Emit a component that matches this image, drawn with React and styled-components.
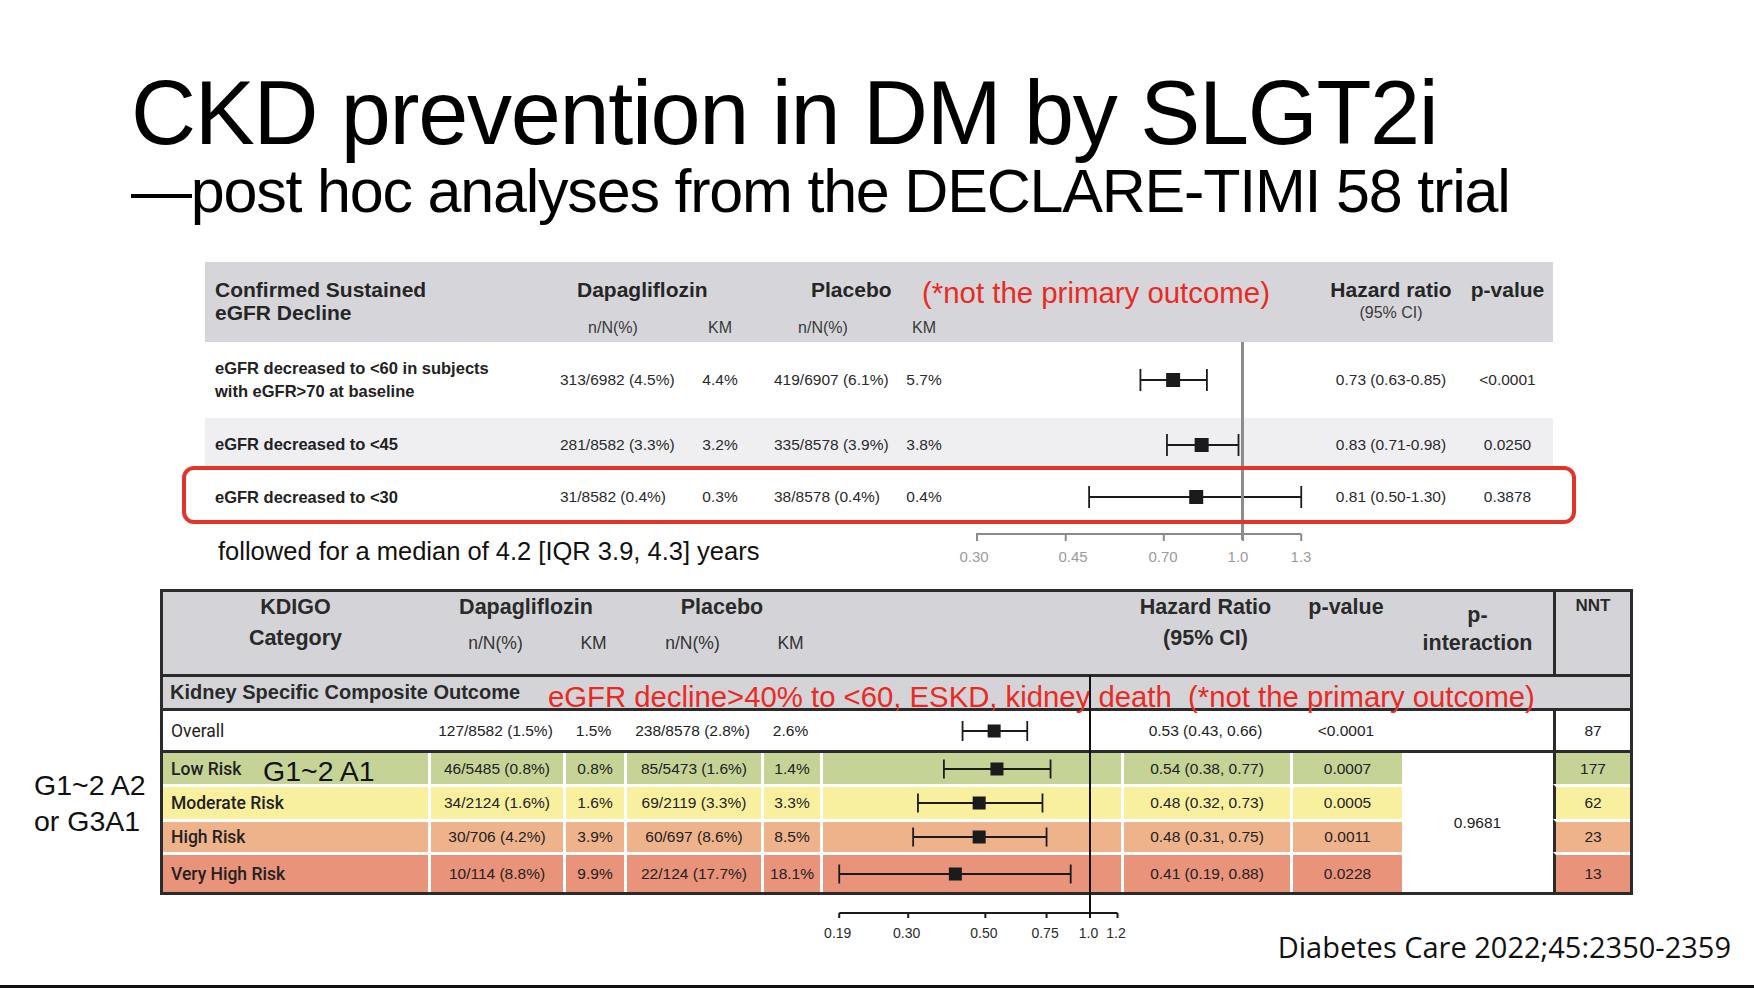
import { Fragment } from "react";
import styled, { createGlobalStyle, css } from "styled-components";

const GlobalStyle = createGlobalStyle`
  html, body {
    margin: 0;
    padding: 0;
    background: #fff;
  }
  body {
    font-family: "Liberation Sans", Arial, sans-serif;
    color: #111;
  }
  * {
    box-sizing: border-box;
  }
`;

const TOP_COLS = "355px 106px 108px 98px 104px 344px 142px 91px";
const BOTTOM_COLS = "265px 135px 61px 137px 59px 301px 169px 112px 151px 77px";
const DARK = "#2b2b2b";
const RED = "#ea2a22";

const topRows = [
  {
    label: ["eGFR decreased to <60 in subjects", "with eGFR>70 at baseline"],
    dapa: "313/6982 (4.5%)",
    dapaKm: "4.4%",
    pla: "419/6907 (6.1%)",
    plaKm: "5.7%",
    ci: [0.73, 0.63, 0.85],
    hr: "0.73 (0.63-0.85)",
    p: "<0.0001",
    h: 76,
    bg: "#fff",
  },
  {
    label: ["eGFR decreased to <45"],
    dapa: "281/8582 (3.3%)",
    dapaKm: "3.2%",
    pla: "335/8578 (3.9%)",
    plaKm: "3.8%",
    ci: [0.83, 0.71, 0.98],
    hr: "0.83 (0.71-0.98)",
    p: "0.0250",
    h: 49,
    shift: 4,
    bg: "#efeff1",
  },
  {
    label: ["eGFR decreased to <30"],
    dapa: "31/8582 (0.4%)",
    dapaKm: "0.3%",
    pla: "38/8578 (0.4%)",
    plaKm: "0.4%",
    ci: [0.81, 0.5, 1.3],
    hr: "0.81 (0.50-1.30)",
    p: "0.3878",
    h: 60,
    bg: "#fff",
    framed: true,
  },
];

const topTicks = [
  { v: 0.3, label: "0.30", lx: -2 },
  { v: 0.45, label: "0.45", lx: 97 },
  { v: 0.7, label: "0.70", lx: 187 },
  { v: 1.0, label: "1.0", lx: 262 },
  { v: 1.3, label: "1.3", lx: 325 },
];

const bottomTicks = [
  { v: 0.19, label: "0.19" },
  { v: 0.3, label: "0.30" },
  { v: 0.5, label: "0.50" },
  { v: 0.75, label: "0.75" },
  { v: 1.0, label: "1.0" },
  { v: 1.2, label: "1.2" },
];

const overall = {
  dapa: "127/8582 (1.5%)",
  dapaKm: "1.5%",
  pla: "238/8578 (2.8%)",
  plaKm: "2.6%",
  ci: [0.53, 0.43, 0.66],
  hr: "0.53 (0.43, 0.66)",
  p: "<0.0001",
  nnt: "87",
};

const risks = [
  {
    name: "Low Risk",
    tag: "G1~2 A1",
    bg: "#c6d396",
    dapa: "46/5485 (0.8%)",
    dapaKm: "0.8%",
    pla: "85/5473 (1.6%)",
    plaKm: "1.4%",
    ci: [0.54, 0.38, 0.77],
    hr: "0.54 (0.38, 0.77)",
    p: "0.0007",
    nnt: "177",
  },
  {
    name: "Moderate Risk",
    bg: "#f8f09e",
    dapa: "34/2124 (1.6%)",
    dapaKm: "1.6%",
    pla: "69/2119 (3.3%)",
    plaKm: "3.3%",
    ci: [0.48, 0.32, 0.73],
    hr: "0.48 (0.32, 0.73)",
    p: "0.0005",
    nnt: "62",
  },
  {
    name: "High Risk",
    bg: "#eeb38b",
    dapa: "30/706 (4.2%)",
    dapaKm: "3.9%",
    pla: "60/697 (8.6%)",
    plaKm: "8.5%",
    ci: [0.48, 0.31, 0.75],
    hr: "0.48 (0.31, 0.75)",
    p: "0.0011",
    nnt: "23",
  },
  {
    name: "Very High Risk",
    bg: "#e8937a",
    dapa: "10/114 (8.8%)",
    dapaKm: "9.9%",
    pla: "22/124 (17.7%)",
    plaKm: "18.1%",
    ci: [0.41, 0.19, 0.88],
    hr: "0.41 (0.19, 0.88)",
    p: "0.0228",
    nnt: "13",
  },
];

// forest plot mark: log scale, origin = x of HR 1.0 inside the cell
function Whisker({ ci, origin, scale, width, height, cap, box }) {
  const [est, lo, hi] = ci;
  const x = (v) => origin + scale * Math.log(v);
  const cy = height / 2;
  return (
    <Plot width={width} height={height}>
      <line x1={x(lo)} x2={x(hi)} y1={cy} y2={cy} stroke="#1b1b1b" strokeWidth="1.8" />
      <line x1={x(lo)} x2={x(lo)} y1={cy - cap / 2} y2={cy + cap / 2} stroke="#1b1b1b" strokeWidth="1.8" />
      <line x1={x(hi)} x2={x(hi)} y1={cy - cap / 2} y2={cy + cap / 2} stroke="#1b1b1b" strokeWidth="1.8" />
      <rect x={x(est) - box / 2} y={cy - box / 2} width={box} height={box} fill="#1b1b1b" />
    </Plot>
  );
}

export default function App() {
  const topX = (v) => 267 + 222 * Math.log(v);
  const botX = (v) => 270 + 151 * Math.log(v);

  return (
    <>
      <GlobalStyle />
      <Slide>
        <TitleBlock>
          <Title>CKD prevention in DM by SLGT2i</Title>
          <Subtitle>—post hoc analyses from the DECLARE-TIMI 58 trial</Subtitle>
        </TitleBlock>

        <TopSection>
          <TopHead>
            <HeadTitle $col="1" $rows="1 / span 2" $indent={10}>
              Confirmed Sustained
              <br />
              eGFR Decline
            </HeadTitle>
            <HeadTitle $col="2 / span 2" $indent={17}>
              Dapagliflozin
            </HeadTitle>
            <HeadTitle $col="4 / span 2" $indent={37}>
              Placebo
            </HeadTitle>
            <HeadNote>(*not the primary outcome)</HeadNote>
            <HeadTitle $col="7" $rows="1 / span 2" $align="center">
              Hazard ratio
              <HeadSmall>(95% CI)</HeadSmall>
            </HeadTitle>
            <HeadTitle $col="8" $align="center">
              p-value
            </HeadTitle>
            <HeadSub $col="2">n/N(%)</HeadSub>
            <HeadSub $col="3">KM</HeadSub>
            <HeadSub $col="4">n/N(%)</HeadSub>
            <HeadSub $col="5">KM</HeadSub>
          </TopHead>

          {topRows.map((r) => (
            <TopRow key={r.label[0]} $h={r.h} $shift={r.shift} $bg={r.bg} $framed={r.framed}>
              <TopLabel>
                {r.label.map((line) => (
                  <div key={line}>{line}</div>
                ))}
              </TopLabel>
              <TopVal>{r.dapa}</TopVal>
              <TopVal>{r.dapaKm}</TopVal>
              <TopVal>{r.pla}</TopVal>
              <TopVal>{r.plaKm}</TopVal>
              <Whisker ci={r.ci} origin={267} scale={222} width={344} height={30} cap={22} box={14} />
              <TopVal>{r.hr}</TopVal>
              <TopVal>{r.p}</TopVal>
            </TopRow>
          ))}

          <TopAxisRow>
            <FollowNote>followed for a median of 4.2 [IQR 3.9, 4.3] years</FollowNote>
            <Plot width={344} height={50}>
              <line x1={0} x2={topX(1.3)} y1={7} y2={7} stroke="#8a8a8a" strokeWidth="2" />
              {topTicks.map((t) => (
                <g key={t.label}>
                  <line x1={Math.max(topX(t.v), 1)} x2={Math.max(topX(t.v), 1)} y1={7} y2={14} stroke="#8a8a8a" strokeWidth="2" />
                  <TickText x={t.lx} y={34.5} fill="#9b9b9b" fontSize="15">
                    {t.label}
                  </TickText>
                </g>
              ))}
            </Plot>
          </TopAxisRow>

          <RefLine />
        </TopSection>

        <BottomSection>
          <SideNote>
            G1~2 A2
            <br />
            or G3A1
          </SideNote>

          <BottomWrap>
            <BottomTable>
              <BHead>
                <BHeadTitle $col="1" $rows="1 / span 2">
                  KDIGO
                  <br />
                  Category
                </BHeadTitle>
                <BHeadTitle $col="2 / span 2">Dapagliflozin</BHeadTitle>
                <BHeadTitle $col="4 / span 2">Placebo</BHeadTitle>
                <BHeadTitle $col="7" $rows="1 / span 2">
                  Hazard Ratio
                  <br />
                  (95% CI)
                </BHeadTitle>
                <BHeadTitle $col="8">p-value</BHeadTitle>
                <BHeadTitle $col="9" $rows="1 / span 2" $lh={28} $pad={8.5}>
                  p-
                  <br />
                  interaction
                </BHeadTitle>
                <NntHead>NNT</NntHead>
                <BHeadSub $col="2">n/N(%)</BHeadSub>
                <BHeadSub $col="3">KM</BHeadSub>
                <BHeadSub $col="4">n/N(%)</BHeadSub>
                <BHeadSub $col="5">KM</BHeadSub>
              </BHead>

              <KidneyRow>
                <KidneyLabel>Kidney Specific Composite Outcome</KidneyLabel>
                <KidneyNote>eGFR decline&gt;40% to &lt;60, ESKD, kidney death  (*not the primary outcome)</KidneyNote>
              </KidneyRow>

              <OverallRow>
                <BCell $align="flex-start">
                  <RowName $weight={400}>Overall</RowName>
                </BCell>
                <BCell><Num>{overall.dapa}</Num></BCell>
                <BCell><Num>{overall.dapaKm}</Num></BCell>
                <BCell><Num>{overall.pla}</Num></BCell>
                <BCell><Num>{overall.plaKm}</Num></BCell>
                <BCell $align="flex-start">
                  <Whisker ci={overall.ci} origin={270} scale={151} width={301} height={26} cap={20} box={13} />
                </BCell>
                <BCell><Num>{overall.hr}</Num></BCell>
                <BCell><Num>{overall.p}</Num></BCell>
                <BCell />
                <BCell $edge={DARK}><Num>{overall.nnt}</Num></BCell>
              </OverallRow>

              <RiskGrid>
                <PInteraction>
                  <Num>0.9681</Num>
                </PInteraction>
                {risks.map((r, i) => (
                  <Fragment key={r.name}>
                    <BCell $bg={r.bg} $top={i > 0} $align="flex-start">
                      <RowName $weight={500}>{r.name}</RowName>
                      {r.tag && <RowTag>{r.tag}</RowTag>}
                    </BCell>
                    <BCell $bg={r.bg} $top={i > 0} $edge="#fff"><Num>{r.dapa}</Num></BCell>
                    <BCell $bg={r.bg} $top={i > 0} $edge="#fff"><Num>{r.dapaKm}</Num></BCell>
                    <BCell $bg={r.bg} $top={i > 0} $edge="#fff"><Num>{r.pla}</Num></BCell>
                    <BCell $bg={r.bg} $top={i > 0} $edge="#fff"><Num>{r.plaKm}</Num></BCell>
                    <BCell $bg={r.bg} $top={i > 0} $edge="#fff" $align="flex-start">
                      <Whisker ci={r.ci} origin={267} scale={151} width={298} height={26} cap={19} box={13} />
                    </BCell>
                    <BCell $bg={r.bg} $top={i > 0} $edge="#fff"><Num>{r.hr}</Num></BCell>
                    <BCell $bg={r.bg} $top={i > 0} $edge="#fff"><Num>{r.p}</Num></BCell>
                    <BCell $bg={r.bg} $top={i > 0} $edge={DARK}><Num>{r.nnt}</Num></BCell>
                  </Fragment>
                ))}
              </RiskGrid>
            </BottomTable>
            <ZeroLine />
          </BottomWrap>
        </BottomSection>

        <Footer>
          <AxisBox>
            <Plot width={301} height={50}>
              <line x1={botX(0.19)} x2={botX(1.2)} y1={18} y2={18} stroke="#1b1b1b" strokeWidth="2" />
              {bottomTicks.map((t) => (
                <g key={t.label}>
                  <line x1={botX(t.v)} x2={botX(t.v)} y1={18} y2={23} stroke="#1b1b1b" strokeWidth="2" />
                  <TickText x={botX(t.v) - 1.5} y={43} fill="#2a2a2a" fontSize="14">
                    {t.label}
                  </TickText>
                </g>
              ))}
            </Plot>
          </AxisBox>
          <Citation>Diabetes Care 2022;45:2350-2359</Citation>
        </Footer>
      </Slide>
    </>
  );
}

const Slide = styled.div`
  position: relative;
  display: flex;
  flex-direction: column;
  width: 1754px;
  height: 988px;
  overflow: hidden;
  background: #fff;
  border-bottom: 3px solid #111;
`;

const TitleBlock = styled.header`
  padding: 68px 0 0 131px;
  color: #000;
`;

const Title = styled.h1`
  margin: 0;
  font: 400 90px/90px "Liberation Sans", Arial, sans-serif;
  letter-spacing: -1.3px;
  white-space: nowrap;
`;

const Subtitle = styled.h2`
  margin: 3px 0 0;
  font: 400 61px/61px "Liberation Sans", Arial, sans-serif;
  letter-spacing: -1.2px;
  white-space: nowrap;
`;

const TopSection = styled.section`
  position: relative;
  width: 1348px;
  margin: 40px 0 0 205px;
`;

const TopHead = styled.div`
  display: grid;
  grid-template-columns: ${TOP_COLS};
  grid-template-rows: 26px 20px;
  row-gap: 14px;
  height: 80px;
  padding-top: 16px;
  background: #d6d6da;
`;

const HeadTitle = styled.div`
  grid-column: ${(p) => p.$col};
  grid-row: ${(p) => p.$rows || "1"};
  padding-left: ${(p) => p.$indent || 0}px;
  text-align: ${(p) => p.$align || "left"};
  font: 700 21px/23px "Liberation Sans", Arial, sans-serif;
  color: #262626;
  white-space: nowrap;
`;

const HeadSmall = styled.span`
  display: block;
  margin-top: 1.5px;
  font: 400 16px/20px "Liberation Sans", Arial, sans-serif;
  color: #3a3a3a;
`;

const HeadNote = styled.div`
  grid-column: 6 / span 2;
  grid-row: 1;
  margin-left: -54px;
  padding-top: 3px;
  font: 400 29.4px/23px "Liberation Sans", Arial, sans-serif;
  color: ${RED};
  white-space: nowrap;
`;

const HeadSub = styled.div`
  grid-column: ${(p) => p.$col};
  grid-row: 2;
  text-align: center;
  font: 400 16px/20px "Liberation Sans", Arial, sans-serif;
  color: #3a3a3a;
`;

const TopRow = styled.div`
  position: relative;
  display: grid;
  grid-template-columns: ${TOP_COLS};
  align-items: center;
  height: ${(p) => p.$h}px;
  padding-top: ${(p) => p.$shift || 0}px;
  background: ${(p) => p.$bg};
  ${(p) =>
    p.$framed &&
    css`
      &::after {
        content: "";
        position: absolute;
        inset: -1px -23px 3px -23px;
        border: 4.5px solid #e3342b;
        border-radius: 12px;
        z-index: 2;
        pointer-events: none;
      }
    `}
`;

const TopLabel = styled.div`
  padding-left: 10px;
  font: 700 16.5px/23px "Liberation Sans", Arial, sans-serif;
  color: #222;
  white-space: nowrap;
`;

const TopVal = styled.div`
  text-align: center;
  font: 400 15.5px/20px "Liberation Sans", Arial, sans-serif;
  color: #2a2a2a;
  white-space: nowrap;
`;

const Plot = styled.svg`
  display: block;
  overflow: visible;
`;

const TickText = styled.text`
  font-family: "Liberation Sans", Arial, sans-serif;
  text-anchor: middle;
`;

const TopAxisRow = styled.div`
  display: grid;
  grid-template-columns: ${TOP_COLS};
  height: 62px;
`;

const FollowNote = styled.div`
  grid-column: 1 / span 5;
  padding: 9px 0 0 13px;
  font: 400 25.5px/30px "Liberation Sans", Arial, sans-serif;
  color: #111;
  white-space: nowrap;
`;

const RefLine = styled.div`
  position: absolute;
  left: 1036px;
  top: 80px;
  width: 3px;
  height: 198px;
  background: #8d8d8d;
  z-index: 1;
`;

const BottomSection = styled.section`
  display: flex;
`;

const SideNote = styled.div`
  width: 160px;
  padding: 178px 0 0 34px;
  font: 400 28.5px/36px "Liberation Sans", Arial, sans-serif;
  color: #111;
  white-space: nowrap;
`;

const BottomWrap = styled.div`
  position: relative;
  width: 1473px;
`;

const BottomTable = styled.div`
  border: 3px solid ${DARK};
  background: #fff;
`;

const BHead = styled.div`
  display: grid;
  grid-template-columns: ${BOTTOM_COLS};
  grid-template-rows: 40px 42px;
  background: #d4d4d8;
  border-bottom: 3px solid ${DARK};
`;

const BHeadTitle = styled.div`
  grid-column: ${(p) => p.$col};
  grid-row: ${(p) => p.$rows || "1"};
  padding-top: ${(p) => p.$pad || 0}px;
  text-align: center;
  font: 700 21.5px / ${(p) => p.$lh || 31}px "Liberation Sans", Arial, sans-serif;
  color: #2a2a2a;
  white-space: nowrap;
`;

const BHeadSub = styled.div`
  grid-column: ${(p) => p.$col};
  grid-row: 2;
  text-align: center;
  font: 400 17.5px/22px "Liberation Sans", Arial, sans-serif;
  color: #333;
`;

const NntHead = styled.div`
  grid-column: 10;
  grid-row: 1 / span 2;
  padding-top: 4px;
  border-left: 3px solid ${DARK};
  text-align: center;
  font: 700 17px/20px "Liberation Sans", Arial, sans-serif;
  color: #2a2a2a;
`;

const KidneyRow = styled.div`
  display: grid;
  grid-template-columns: 385px 1fr;
  height: 34px;
  background: #d4d4d8;
  border-bottom: 3px solid ${DARK};
`;

const KidneyLabel = styled.div`
  padding-left: 7px;
  font: 700 20px/31px "Liberation Sans", Arial, sans-serif;
  color: #2a2a2a;
  white-space: nowrap;
`;

const KidneyNote = styled.div`
  padding-top: 4px;
  font: 400 29.3px/31px "Liberation Sans", Arial, sans-serif;
  color: ${RED};
  white-space: pre;
`;

const OverallRow = styled.div`
  display: grid;
  grid-template-columns: ${BOTTOM_COLS};
  height: 42px;
  background: #fff;
  border-bottom: 3px solid ${DARK};
`;

const RiskGrid = styled.div`
  display: grid;
  grid-template-columns: ${BOTTOM_COLS};
  grid-template-rows: 31px 35px 33px 40px;
`;

const BCell = styled.div`
  display: flex;
  align-items: center;
  justify-content: ${(p) => p.$align || "center"};
  min-width: 0;
  background: ${(p) => p.$bg || "transparent"};
  border-left: ${(p) => (p.$edge ? `3px solid ${p.$edge}` : "none")};
  border-top: ${(p) => (p.$top ? "3px solid #fff" : "none")};
`;

const PInteraction = styled.div`
  grid-column: 9;
  grid-row: 1 / span 4;
  display: flex;
  align-items: center;
  justify-content: center;
  background: #fff;
`;

const RowName = styled.span`
  min-width: 100px;
  padding-left: 8px;
  font: ${(p) => p.$weight} 17.5px/20px Roboto, "Liberation Sans", Arial, sans-serif;
  color: #222;
  white-space: nowrap;
`;

const RowTag = styled.span`
  margin-top: 5px;
  font: 400 28.5px/31px "Liberation Sans", Arial, sans-serif;
  color: #111;
  white-space: nowrap;
`;

const Num = styled.span`
  font: 400 15.5px/20px "Liberation Sans", Arial, sans-serif;
  color: #222;
  white-space: nowrap;
`;

const ZeroLine = styled.div`
  position: absolute;
  left: 929px;
  top: 86px;
  width: 2px;
  height: 242px;
  background: #111;
`;

const Footer = styled.footer`
  flex: 1;
  display: flex;
  align-items: flex-start;
`;

const AxisBox = styled.div`
  width: 301px;
  margin-left: 820px;
`;

const Citation = styled.div`
  margin: 35px 23px 0 auto;
  font: 400 29px/34px "Open Sans", "Liberation Sans", Arial, sans-serif;
  color: #111;
  white-space: nowrap;
`;
